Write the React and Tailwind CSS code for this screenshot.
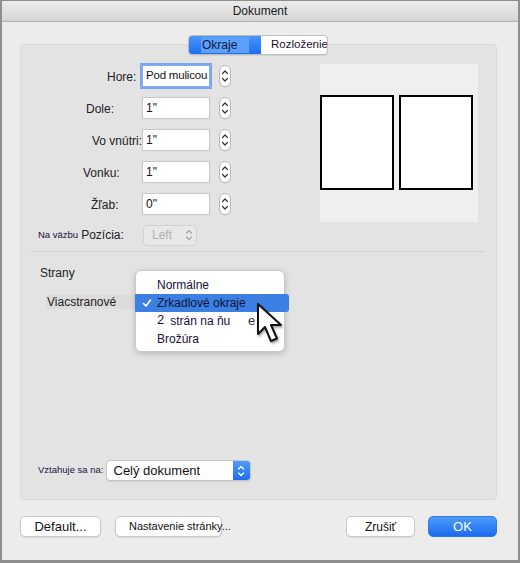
import React from 'react';

const FONT = "font-['Liberation_Sans',Arial,sans-serif]";

function Stepper() {
  return (
    <div className="ml-[9px] w-[12px] h-[22px] rounded-full border border-[#b9b9b9] bg-white flex items-center justify-center shadow-[0_1px_0_rgba(0,0,0,0.05)]">
      <svg width="8" height="16" viewBox="0 0 8 16" fill="none" stroke="#333" strokeWidth="1.2" strokeLinecap="round" strokeLinejoin="round">
        <path d="M1.5 5.5 L4 3 L6.5 5.5" />
        <path d="M1.5 10.5 L4 13 L6.5 10.5" />
      </svg>
    </div>
  );
}

function FieldRow({ label, pad, value, focused }) {
  return (
    <div className="flex items-center h-[32px]">
      <div className="w-[121px] shrink-0 whitespace-nowrap" style={{ paddingLeft: pad }}>
        <span className="text-[12px] text-[#222]">{label}</span>
      </div>
      <div
        className={`relative w-[68px] h-[22px] bg-white border text-[#111] flex items-center pl-[3px] whitespace-nowrap overflow-hidden ${
          focused ? 'border-[#86aef0] ring-2 ring-[#7aa6f2] text-[11.5px] tracking-[-0.2px]' : 'border-[#c9c9c9] text-[12px]'
        }`}
      >
        {value}
      </div>
      <Stepper />
    </div>
  );
}

function Cursor() {
  return (
    <svg width="34" height="44" viewBox="0 0 34 44">
      <path
        d="M3 3 L3 33 L10 26 L16 40 L22 37.5 L16 24 L26 24 Z"
        fill="#fff"
        stroke="#111"
        strokeWidth="2"
        strokeLinejoin="round"
      />
    </svg>
  );
}

export default function App() {
  return (
    <div className={`${FONT} w-[520px] h-[563px] bg-[#ececec] border-l-2 border-r-2 border-t border-b-[3px] border-[#8e8e8e] flex flex-col overflow-hidden`}>
      {/* title bar */}
      <div className="h-[21px] shrink-0 bg-gradient-to-b from-[#ececec] to-[#d5d5d5] border-b border-[#b3b3b3] flex items-center justify-center">
        <span className="text-[12px] text-[#1a1a1a]">Dokument</span>
      </div>

      {/* tabs */}
      <div className="mt-[13px] h-[20px] flex justify-center relative z-10 pr-[2px]">
        <div className="flex h-[20px] rounded-[4px] border border-[#bdbdbd] overflow-hidden bg-white shadow-[0_1px_1px_rgba(0,0,0,0.08)] ml-[-2px]">
          <div className="w-[72px] bg-gradient-to-b from-[#4a95f8] to-[#1c6ef1] flex items-center pl-[12px]">
            <span className="bg-[#5ba1fb] px-[1px] pr-[12px] text-[12px] leading-[16px] text-[#14193a]">Okraje</span>
          </div>
          <div className="w-[66px] flex items-center pl-[10px] whitespace-nowrap">
            <span className="text-[11.5px] text-[#1a1030]">Rozloženie</span>
          </div>
        </div>
      </div>

      {/* panel */}
      <div className="relative -mt-[11px] ml-[18px] w-[477px] h-[456px] shrink-0 rounded-[4px] bg-[#e3e3e3] border border-[#d9d9d9] flex flex-col">
        <div className="flex">
          <div className="w-[299px] pt-[15px]">
            <FieldRow label="Hore:" pad={86} value="Pod mulicou" focused />
            <FieldRow label="Dole:" pad={65} value={'1"'} />
            <FieldRow label="Vo vnútri:" pad={71} value={'1"'} />
            <FieldRow label="Vonku:" pad={62} value={'1"'} />
            <FieldRow label="Žľab:" pad={70} value={'0"'} />
            <div className="flex items-center h-[30px]">
              <div className="w-[122px] shrink-0 whitespace-nowrap pl-[17px] flex items-center">
                <span className="text-[9.5px] text-[#1a1040]">Na väzbu</span>
                <span className="ml-[3px] text-[12px] text-[#222]">Pozícia:</span>
              </div>
              <div className="w-[54px] h-[21px] rounded-[4px] border border-[#d2d2d2] bg-[#e8e8e8] flex items-center pl-[8px] justify-between pr-[3px]">
                <span className="text-[12px] text-[#b0b0b0]">Left</span>
                <svg width="8" height="14" viewBox="0 0 8 14" fill="none" stroke="#a8a8a8" strokeWidth="1.2" strokeLinecap="round" strokeLinejoin="round">
                  <path d="M1.5 5 L4 2.5 L6.5 5" />
                  <path d="M1.5 9 L4 11.5 L6.5 9" />
                </svg>
              </div>
            </div>
          </div>

          {/* preview */}
          <div className="mt-[19px] w-[158px] h-[158px] bg-[#efefef] flex gap-[5px] pt-[31px]">
            <div className="w-[74px] h-[95px] bg-white border-2 border-black" />
            <div className="w-[74px] h-[95px] bg-white border-2 border-black" />
          </div>
        </div>

        <div className="mt-[1px] ml-[9px] w-[455px] h-px bg-[#d2d2d2]" />

        {/* Strany */}
        <div className="mt-[14px] pl-[19px] text-[12px] leading-[14px] text-[#222]">Strany</div>
        <div className="mt-[15px] ml-[25px] flex items-center h-[14px]">
          <span className="bg-[#dcdcdc] pl-[1px] pr-[22px] text-[12px] leading-[14px] text-[#222]">Viacstranové</span>
          <span className="text-[12px] leading-[14px] text-[#222]">s</span>
        </div>

        {/* dropdown menu */}
        <div className="absolute left-[114px] top-[225px] w-[150px] h-[82px] rounded-[6px] bg-white border border-[#c9c9c9] shadow-[0_2px_6px_rgba(0,0,0,0.18)] pt-[5px] z-10">
          <div className="h-[18px] flex items-center pl-[21px] text-[12px] text-[#1a1040]">Normálne</div>
          <div className="relative h-[18px] -ml-px w-[154px] flex items-center pl-[22px] bg-[#3b7fe3] rounded-r-[3px] text-[12px] text-[#0f1438]">
            <svg className="absolute left-[7px] top-[4px]" width="10" height="10" viewBox="0 0 10 10" fill="none" stroke="#fff" strokeWidth="1.6" strokeLinecap="round" strokeLinejoin="round">
              <path d="M1.5 5.5 L4 8 L8.5 2" />
            </svg>
            Zrkadlové okraje
          </div>
          <div className="relative h-[18px] flex items-center pl-[21px] text-[#1a1040]">
            <span className="text-[13px] -mt-[3px]">2</span>
            <span className="ml-[6px] text-[12px]">strán na ňu</span>
            <span className="absolute left-[112px] -top-[1px] text-[13px] text-[#333]">e</span>
          </div>
          <div className="h-[18px] flex items-center pl-[21px] text-[12px] text-[#1a1040]">Brožúra</div>
        </div>

        <div className="absolute left-[234px] top-[256px] z-20 drop-shadow-[1px_2px_1px_rgba(0,0,0,0.35)]">
          <Cursor />
        </div>

        {/* Vztahuje sa na */}
        <div className="mt-auto mb-[18px] pl-[17px] flex items-center">
          <span className="text-[9.5px] text-[#1a1040] whitespace-nowrap">Vztahuje sa na:</span>
          <div className="ml-[2px] w-[145px] h-[21px] rounded-[4px] bg-white border border-[#c6c6c6] shadow-[0_1px_1px_rgba(0,0,0,0.08)] flex items-center overflow-hidden">
            <span className="flex-1 pl-[7px] text-[13px] text-[#111]">Celý dokument</span>
            <div className="w-[17px] h-full bg-gradient-to-b from-[#4f9af8] to-[#1e6ff0] flex items-center justify-center">
              <svg width="8" height="14" viewBox="0 0 8 14" fill="none" stroke="#fff" strokeWidth="1.3" strokeLinecap="round" strokeLinejoin="round">
                <path d="M1.5 5 L4 2.5 L6.5 5" />
                <path d="M1.5 9 L4 11.5 L6.5 9" />
              </svg>
            </div>
          </div>
        </div>
      </div>

      {/* buttons */}
      <div className="mt-[16px] ml-[18px] w-[477px] flex items-center">
        <button className="w-[81px] h-[21px] rounded-[5px] bg-white border border-[#c8c8c8] shadow-[0_1px_1px_rgba(0,0,0,0.08)] text-[13px] text-[#111]">
          Default...
        </button>
        <button className="ml-[14px] w-[107px] h-[21px] rounded-[5px] bg-white border border-[#c8c8c8] shadow-[0_1px_1px_rgba(0,0,0,0.08)] text-[11px] text-[#111] text-left pl-[13px] whitespace-nowrap overflow-visible">
          Nastavenie stránky...
        </button>
        <div className="flex-1" />
        <button className="w-[69px] h-[21px] rounded-[5px] bg-white border border-[#c8c8c8] shadow-[0_1px_1px_rgba(0,0,0,0.08)] text-[12px] text-[#111]">
          Zrušiť
        </button>
        <button className="ml-[13px] w-[69px] h-[21px] rounded-[5px] bg-gradient-to-b from-[#4f9bf9] to-[#1a6bf0] border border-[#2d79ef] text-[13px] text-white">
          OK
        </button>
      </div>
    </div>
  );
}
